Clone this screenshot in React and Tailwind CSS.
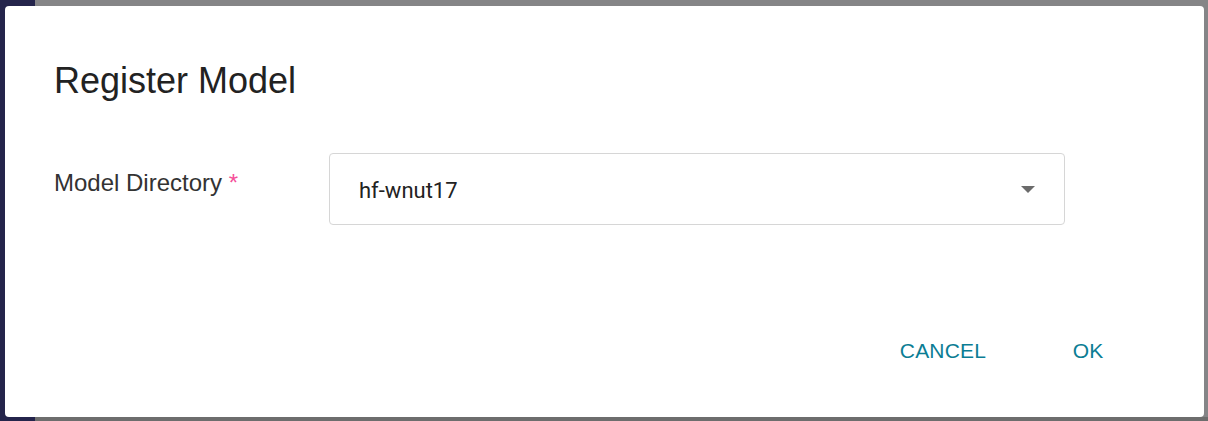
import React from "react";

export default function App() {
  return (
    <div className="relative w-[1208px] h-[421px] overflow-hidden bg-[#868688] flex" style={{ fontFamily: '"Liberation Sans", Arial, sans-serif' }}>
      <div className="w-[35px] h-full bg-[#24244b]" />
      <div className="flex-1 flex flex-col">
        <div className="flex-1 bg-[#858587]" />
        <div className="h-[4px] bg-[#6d6d6d]" />
      </div>

      <div className="absolute left-[5px] top-[6px] w-[1199px] h-[411px] bg-white rounded-[4px] flex flex-col">
        <div className="pl-[49px] pt-[53px]">
          <h2 className="text-[36px] leading-[43px] text-[#222222] font-normal">Register Model</h2>
        </div>

        <div className="flex items-start pl-[49px] mt-[51px]">
          <div className="w-[275px] pt-[16px] text-[24px] leading-[28px] text-[#333333]">
            Model Directory <span className="text-[#f5509a]">*</span>
          </div>
          <div className="w-[736px] h-[72px] border border-[#d6d6d6] rounded-[4px] flex items-center justify-between pl-[29px] pr-[29px]">
            <span className="text-[22px] text-[#222222] pt-[2px]" style={{ fontFamily: 'Roboto, "Liberation Sans", sans-serif' }}>hf-wnut17</span>
            <svg width="14" height="8" viewBox="0 0 14 8" className="mt-[1px]">
              <path d="M0 0 L14 0 L7 7 Z" fill="#6b6b6b" />
            </svg>
          </div>
        </div>

        <div className="flex justify-end items-center gap-[31px] pr-[68px] mt-[102px]">
          <button className="w-[132px] h-[48px] text-[21px] text-[#0b7d94] tracking-[0.2px]">CANCEL</button>
          <button className="w-[96px] h-[48px] text-[21px] text-[#0b7d94]">OK</button>
        </div>
      </div>
    </div>
  );
}
